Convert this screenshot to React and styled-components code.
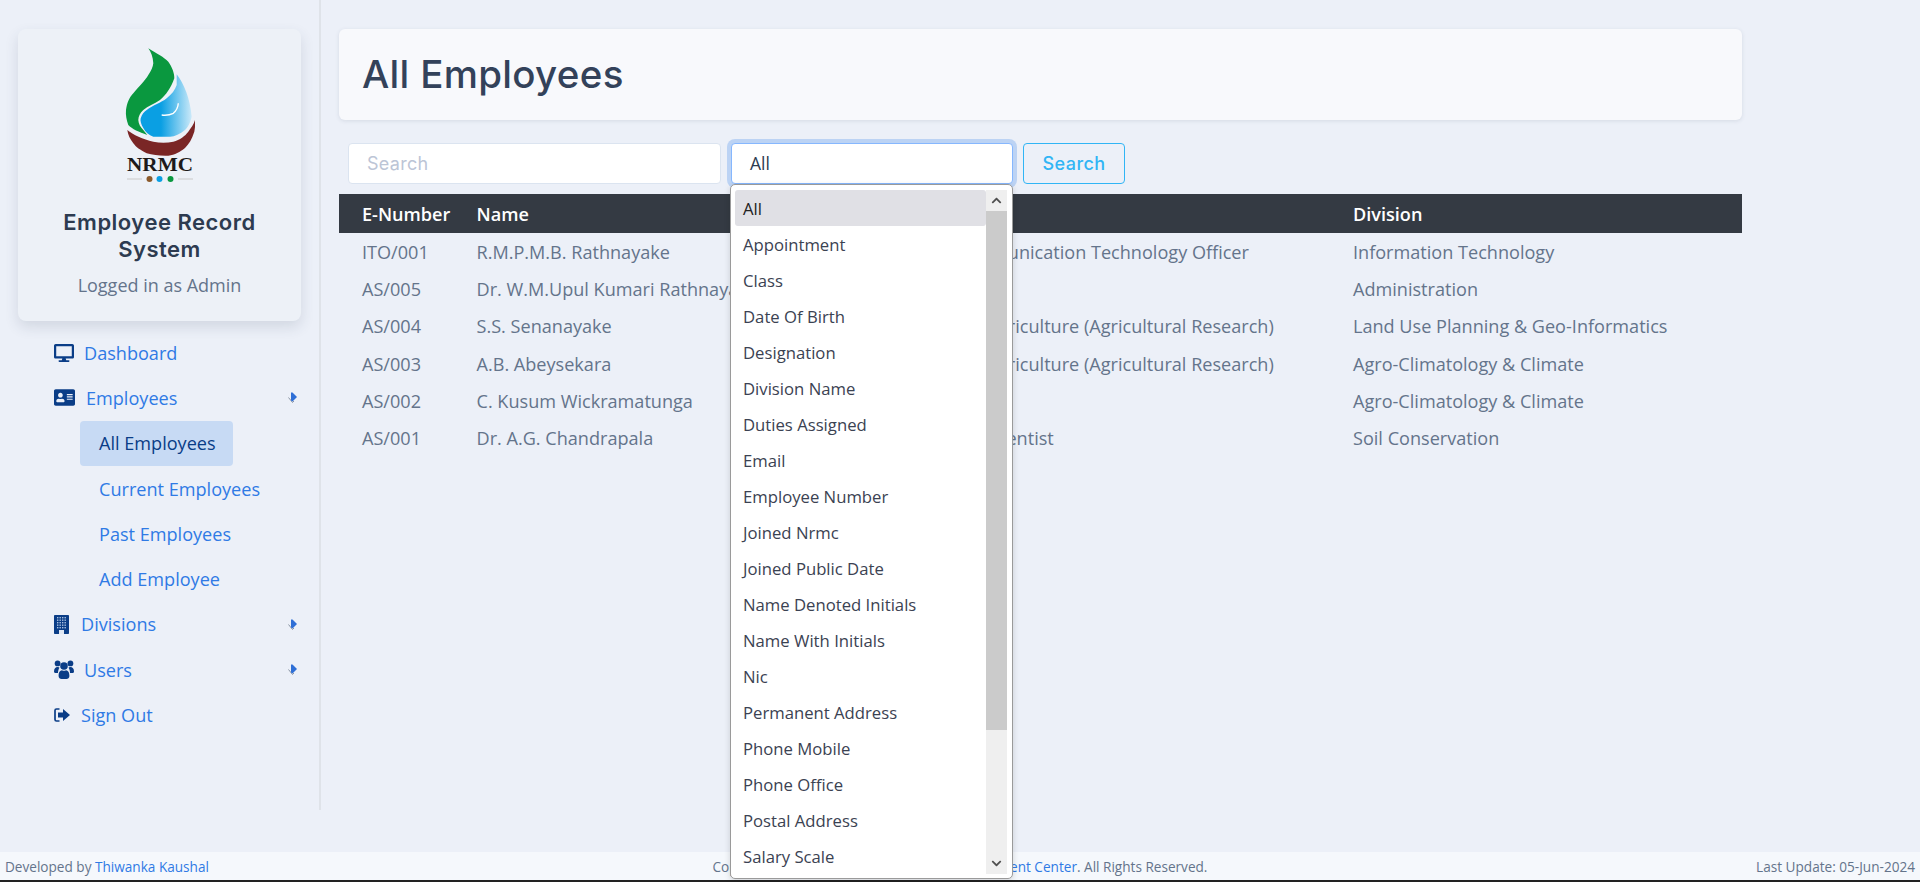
import styled, { createGlobalStyle } from "styled-components";
import { FaDesktop, FaAddressCard, FaChevronUp, FaChevronDown } from "react-icons/fa";

const GlobalStyle = createGlobalStyle`
  html, body {
    margin: 0;
    padding: 0;
    height: 882px;
    overflow: hidden;
    background: #ecf0f8;
  }
  * { box-sizing: border-box; }
  body {
    font-family: "Open Sans", "Noto Sans", sans-serif;
    font-size: 16px;
    color: #64748b;
  }
`;

const Page = styled.div`
  width: 1920px;
  height: 882px;
  display: flex;
  flex-direction: column;
  overflow: hidden;
`;

const Body = styled.div`
  flex: 1;
  display: flex;
  min-height: 0;
`;

const Sidebar = styled.aside`
  width: 321px;
  height: 810px;
  flex: none;
  padding: 29px 18px 0 18px;
  border-right: 2px solid #dfe3e9;
`;

const Profile = styled.div`
  height: 292px;
  padding: 19px 16px 0;
  background: #edf1f7;
  border-radius: 8px;
  box-shadow: 0 6px 14px rgba(50, 65, 90, 0.14);
  text-align: center;
`;

const Logo = styled.svg`
  display: block;
  width: 70px;
  height: 136px;
  margin: 0 auto 25px;
`;

const ProfileTitle = styled.h2`
  margin: 0;
  font-family: Inter, "Open Sans", sans-serif;
  font-size: 22px;
  line-height: 27px;
  font-weight: 600;
  letter-spacing: 0.5px;
  color: #2d3b50;
`;

const ProfileSub = styled.p`
  margin: 10px 0 0;
  font-size: 18px;
  line-height: 24px;
  color: #64748b;
`;

const Nav = styled.nav`
  margin-top: 9px;
  padding-left: 36px;
  padding-right: 4px;
`;

const NavItem = styled.a`
  height: 45.3px;
  display: flex;
  align-items: center;
  font-size: 18.1px;
  color: #2f7ae5;
`;

const NavIcon = styled.span`
  display: flex;
  width: ${(p) => p.$w}px;
  flex: none;
  font-size: ${(p) => p.$size || 20}px;
  color: #0a3d87;
`;

const CaretIcon = styled.svg`
  margin-left: auto;
  width: 9px;
  height: 11px;
  flex: none;
`;

const SubNav = styled.div`
  display: flex;
  flex-direction: column;
  align-items: flex-start;
  padding-left: 26px;
`;

const SubItem = styled.a`
  height: 45.3px;
  display: flex;
  align-items: center;
  padding: 0 17px 0 19px;
  border-radius: 4px;
  font-size: 18.1px;
  color: ${(p) => (p.$active ? "#0a3d87" : "#2f7ae5")};
  background: ${(p) => (p.$active ? "#c7daf4" : "transparent")};
`;

const Main = styled.main`
  width: 1403px;
  margin-left: 18px;
  padding-top: 29px;
  flex: none;
`;

const Header = styled.div`
  height: 91px;
  display: flex;
  align-items: center;
  padding: 0 23px 2px;
  background: #f8f9fc;
  border-radius: 6px;
  box-shadow: 0 1px 4px rgba(50, 65, 90, 0.12);
`;

const Heading = styled.h1`
  margin: 0;
  font-family: Inter, "Open Sans", sans-serif;
  font-size: 38.5px;
  font-weight: 500;
  letter-spacing: 0.3px;
  color: #33425a;
`;

const Filters = styled.div`
  display: flex;
  align-items: center;
  padding: 23px 9px 10px;
`;

const SearchInput = styled.input`
  width: 373px;
  height: 41px;
  padding: 0 18px;
  background: #fff;
  border: 1px solid #dbe4f0;
  border-radius: 4px;
  font-family: Inter, "Open Sans", sans-serif;
  font-size: 18px;
  letter-spacing: 0.3px;
  outline: none;

  &::placeholder {
    color: #bcc5d6;
  }
`;

const SelectBox = styled.div`
  position: relative;
  width: 282px;
  height: 41px;
  margin-left: 10px;
  padding-left: 18px;
  padding-bottom: 1px;
  display: flex;
  align-items: center;
  background: #fff;
  border: 1px solid #86b7fe;
  border-radius: 4px;
  box-shadow: 0 0 0 4px #bcd3f4;
  font-size: 17.5px;
  color: #2d3b50;
`;

const Dropdown = styled.div`
  position: absolute;
  z-index: 5;
  left: -2px;
  top: 39px;
  margin-top: 1px;
  width: 283px;
  height: 695px;
  padding: 5px 5px 4px 4px;
  display: flex;
  background: #fff;
  border: 1px solid #9a9a9a;
  border-radius: 5px;
  box-shadow: 0 2px 6px rgba(0, 0, 0, 0.15);
`;

const OptionList = styled.div`
  flex: 1;
  min-width: 0;
  overflow: hidden;
`;

const Option = styled.div`
  height: 36px;
  display: flex;
  align-items: center;
  padding-left: 8px;
  border-radius: 3px;
  font-size: 16.7px;
  color: ${(p) => (p.$selected ? "#222" : "#3b4252")};
  background: ${(p) => (p.$selected ? "#e0e0e5" : "transparent")};
`;

const Scrollbar = styled.div`
  width: 21px;
  flex: none;
  display: flex;
  flex-direction: column;
  background: #efefef;
`;

const ScrollArrow = styled.div`
  height: 21px;
  flex: none;
  margin-top: ${(p) => (p.$end ? "auto" : "0")};
  display: flex;
  align-items: center;
  justify-content: center;
  font-size: 11px;
  color: #505050;
`;

const ScrollThumb = styled.div`
  height: 519px;
  flex: none;
  background: #cbcbcb;
`;

const SearchButton = styled.button`
  width: 102px;
  height: 41px;
  margin-left: 10px;
  background: transparent;
  border: 1px solid #31b5f5;
  border-radius: 4px;
  font-family: Inter, "Open Sans", sans-serif;
  font-size: 18px;
  font-weight: 500;
  letter-spacing: 0.4px;
  color: #31b5f5;
`;

const Table = styled.div`
  width: 100%;
`;

const Row = styled.div`
  display: grid;
  grid-template-columns: 114.5px 370.5px 506px 1fr;
  align-items: center;
  padding-left: 23px;
  height: ${(p) => (p.$head ? "39px" : "37.3px")};
  font-size: 18.1px;
  font-weight: ${(p) => (p.$head ? 600 : 400)};
  color: ${(p) => (p.$head ? "#fff" : "#64748b")};
  background: ${(p) => (p.$head ? "#343a43" : "transparent")};
`;

const Cell = styled.div`
  white-space: nowrap;
`;

const Footer = styled.footer`
  height: 30px;
  margin-top: auto;
  flex: none;
  display: grid;
  grid-template-columns: 1fr auto 1fr;
  align-items: center;
  padding: 0 5px;
  background: #f5f8fc;
  border-bottom: 2px solid #222;
  font-size: 13.6px;
  color: #64748b;
`;

const FooterRight = styled.span`
  text-align: right;
`;

const FootLink = styled.a`
  color: #2f7ae5;
`;

const employees = [
  ["ITO/001", "R.M.P.M.B. Rathnayake", "Information Communication Technology Officer", "Information Technology"],
  ["AS/005", "Dr. W.M.Upul Kumari Rathnayake", "Director", "Administration"],
  ["AS/004", "S.S. Senanayake", "Asst. Director of Agriculture (Agricultural Research)", "Land Use Planning & Geo-Informatics"],
  ["AS/003", "A.B. Abeysekara", "Asst. Director of Agriculture (Agricultural Research)", "Agro-Climatology & Climate"],
  ["AS/002", "C. Kusum Wickramatunga", "Director", "Agro-Climatology & Climate"],
  ["AS/001", "Dr. A.G. Chandrapala", "Senior Principal Scientist", "Soil Conservation"],
];

const options = [
  "All", "Appointment", "Class", "Date Of Birth", "Designation", "Division Name", "Duties Assigned",
  "Email", "Employee Number", "Joined Nrmc", "Joined Public Date", "Name Denoted Initials",
  "Name With Initials", "Nic", "Permanent Address", "Phone Mobile", "Phone Office", "Postal Address", "Salary Scale",
];

function NrmcLogo() {
  return (
    <Logo viewBox="0 0 70 136" role="img" aria-label="NRMC">
      <defs>
        <linearGradient id="drop" x1="0" x2="1">
          <stop offset="0.4" stopColor="#0a9fe3" />
          <stop offset="1" stopColor="#cbe9f9" />
        </linearGradient>
      </defs>
      <path d="M51.7 26.3C59 36 65 50 66.7 68.7C65 76 62 80 60 82C55 86 50 88.7 45 88.7L28.3 88.7C24 87 20 84 18.3 80C16 76 15 73 15.7 70.3C17 66 19 64 21.7 62C28 57 36 55 41.7 50.3C47 46 50 42 51.7 37Z" fill="url(#drop)" />
      <path d="M23.3 0.3C32 6 39 9 43.3 13.7C47 19 49.5 25 49.3 30.3C46 40 41 47 35 52C29 56 23 58 18.3 62C15 65 13.5 68 13.3 72C13.5 76 15.5 79 18.3 82L22.3 87C14 84 7 81 3.3 77C1.5 72 0.5 67 1 62C2 55 4 50 8.3 45.3C14 38 20 33 23.3 27C26 23 28 19 28.3 15.3C28 9 26 4 23.3 0.3Z" fill="#0a983f" />
      <path d="M2.3 82C8 87 18 91 28.3 93.7C35 95 42 95 48.3 93.7C55 92 60 88 63.3 83.7C66 80 69 76 70 72C70.5 76 70 80 69.3 83.7C67 91 64 96 60 100C55 104 50 107 43.3 107.7C35 108 28 107 21.7 105.3C15 102 11 99 8.3 95.3C5 91 3 87 2.3 82Z" fill="#7a2626" />
      <path d="M53.3 55.3C53 60 51 63 48.3 65.3C45 67 41 67.5 36.7 67" stroke="#fff" strokeWidth="1.4" fill="none" />
      <text x="35" y="123" textAnchor="middle" textLength="66" lengthAdjust="spacingAndGlyphs" fontFamily="Liberation Serif, serif" fontWeight="700" fontSize="18" fill="#1d1a1a">NRMC</text>
      <path d="M2 131H17M53 131H68" stroke="#c9c9c9" strokeWidth="1" />
      <circle cx="24.5" cy="131" r="3" fill="#8b5a2b" />
      <circle cx="34.5" cy="131" r="3" fill="#0a9fe3" />
      <circle cx="45.5" cy="131" r="3" fill="#0a983f" />
    </Logo>
  );
}

function Caret() {
  return (
    <CaretIcon viewBox="0 0 9 11">
      <path d="M0.5 5.5L4.5 10.5L6 9" stroke="#8a94a3" strokeWidth="1" fill="none" />
      <path d="M3 0.5H4.5L9 5L4.5 9.5L3 8.5Z" fill="#2f6fd6" />
    </CaretIcon>
  );
}

function BuildingIcon() {
  const windows = [];
  for (let r = 0; r < 5; r++) {
    for (let c = 0; c < 4; c++) {
      windows.push(<rect key={`${r}-${c}`} x={3 + c * 2.5} y={2 + r * 2.5} width="1.4" height="1.4" fill="#a9c0e0" />);
    }
  }
  return (
    <svg width="15" height="19" viewBox="0 0 15 19">
      <rect width="15" height="19" rx="0.8" fill="#0a3d87" />
      {windows}
      <rect x="5" y="15" width="5" height="4" fill="#dfe7f3" />
    </svg>
  );
}

function UsersIcon() {
  return (
    <svg width="20" height="19" viewBox="0 0 20 19" fill="#0a3d87">
      <circle cx="3.6" cy="3.4" r="2.9" />
      <circle cx="16.4" cy="3.4" r="2.9" />
      <path d="M0 11.5C0 8.5 1.5 7 3.5 7C4.5 7 5 7.3 5.5 7.8C4.5 9.2 4 11 4 13H1.5C0.5 13 0 12.4 0 11.5Z" />
      <path d="M20 11.5C20 8.5 18.5 7 16.5 7C15.5 7 15 7.3 14.5 7.8C15.5 9.2 16 11 16 13H18.5C19.5 13 20 12.4 20 11.5Z" />
      <circle cx="10" cy="6" r="3.8" />
      <path d="M4.6 16C4.6 12 6 10.5 8 10.2C9.2 11 10.8 11 12 10.2C14 10.5 15.4 12 15.4 16C15.4 18 14 19 12.5 19H7.5C6 19 4.6 18 4.6 16Z" />
    </svg>
  );
}

function SignOutIcon() {
  return (
    <svg width="16" height="14" viewBox="0 0 16 14">
      <path d="M5.5 1H2.5C1.5 1 1 1.6 1 2.5V11.5C1 12.4 1.5 13 2.5 13H5.5" stroke="#0a3d87" strokeWidth="1.7" fill="none" />
      <path d="M4 4.5H9V1L16 7L9 13V9.5H4Z" fill="#0a3d87" />
    </svg>
  );
}

export default function App() {
  return (
    <>
      <GlobalStyle />
      <Page>
        <Body>
          <Sidebar>
            <Profile>
              <NrmcLogo />
              <ProfileTitle>Employee Record System</ProfileTitle>
              <ProfileSub>Logged in as Admin</ProfileSub>
            </Profile>
            <Nav>
              <NavItem><NavIcon $w={30}><FaDesktop /></NavIcon>Dashboard</NavItem>
              <NavItem><NavIcon $w={32} $size={21}><FaAddressCard /></NavIcon>Employees<Caret /></NavItem>
              <SubNav>
                <SubItem $active>All Employees</SubItem>
                <SubItem>Current Employees</SubItem>
                <SubItem>Past Employees</SubItem>
                <SubItem>Add Employee</SubItem>
              </SubNav>
              <NavItem><NavIcon $w={27}><BuildingIcon /></NavIcon>Divisions<Caret /></NavItem>
              <NavItem><NavIcon $w={30}><UsersIcon /></NavIcon>Users<Caret /></NavItem>
              <NavItem><NavIcon $w={27}><SignOutIcon /></NavIcon>Sign Out</NavItem>
            </Nav>
          </Sidebar>
          <Main>
            <Header><Heading>All Employees</Heading></Header>
            <Filters>
              <SearchInput placeholder="Search" />
              <SelectBox>
                All
                <Dropdown>
                  <OptionList>
                    {options.map((o, i) => (
                      <Option key={o} $selected={i === 0}>{o}</Option>
                    ))}
                  </OptionList>
                  <Scrollbar>
                    <ScrollArrow><FaChevronUp /></ScrollArrow>
                    <ScrollThumb />
                    <ScrollArrow $end><FaChevronDown /></ScrollArrow>
                  </Scrollbar>
                </Dropdown>
              </SelectBox>
              <SearchButton>Search</SearchButton>
            </Filters>
            <Table>
              <Row $head>
                <Cell>E-Number</Cell>
                <Cell>Name</Cell>
                <Cell>Designation</Cell>
                <Cell>Division</Cell>
              </Row>
              {employees.map((e) => (
                <Row key={e[0]}>
                  {e.map((v) => <Cell key={v}>{v}</Cell>)}
                </Row>
              ))}
            </Table>
          </Main>
        </Body>
        <Footer>
          <span>Developed by <FootLink>Thiwanka Kaushal</FootLink></span>
          <span>Copyright © 2024 <FootLink>Natural Resources Management Center</FootLink>. All Rights Reserved.</span>
          <FooterRight>Last Update: 05-Jun-2024</FooterRight>
        </Footer>
      </Page>
    </>
  );
}
